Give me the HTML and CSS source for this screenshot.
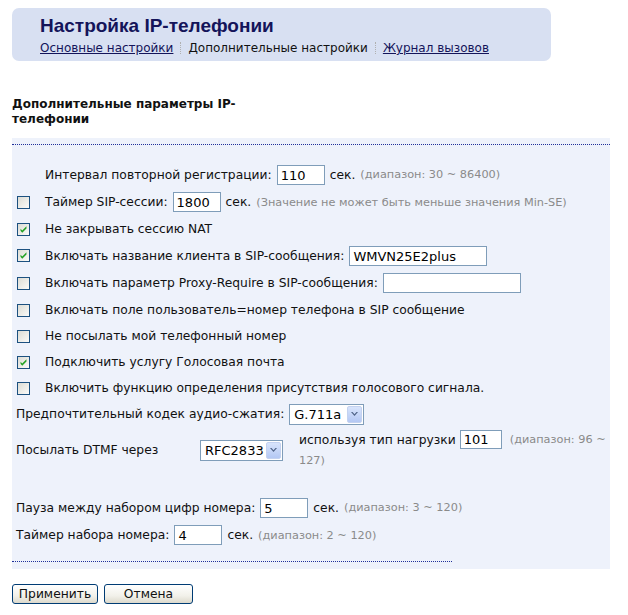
FILE: index.html
```html
<!DOCTYPE html>
<html lang="ru">
<head>
    <meta charset="UTF-8">
    <title>Настройка IP-телефонии</title>
    <link rel="stylesheet" href="styles.css">
</head>
<body>
<div class="header">
    <h1>Настройка IP-телефонии</h1>
    <div class="tabs">
        <a href="#">Основные настройки</a>
        <span class="sep"></span>
        <span class="current">Дополнительные настройки</span>
        <span class="sep"></span>
        <a href="#">Журнал вызовов</a>
    </div>
</div>

<h2 class="section">Дополнительные параметры IP-телефонии</h2>

<div class="panel">
    <div class="dots top"></div>

    <div class="row tall indent">
        <span>Интервал повторной регистрации:</span>
        <span class="field w48">110</span>
        <span>сек.</span>
        <span class="hint">(диапазон: 30 ~ 86400)</span>
    </div>
    <div class="row tall">
        <span class="cb"></span>
        <span>Таймер SIP-сессии:</span>
        <span class="field w48">1800</span>
        <span>сек.</span>
        <span class="hint">(Значение не может быть меньше значения Min-SE)</span>
    </div>
    <div class="row">
        <span class="cb"><svg viewBox="0 0 13 13"><path d="M3 5.5 L5 7.8 L10 2.8 L10 5.3 L5 10.3 L3 8 Z" fill="#21a121"/></svg></span>
        <span>Не закрывать сессию NAT</span>
    </div>
    <div class="row tall">
        <span class="cb"><svg viewBox="0 0 13 13"><path d="M3 5.5 L5 7.8 L10 2.8 L10 5.3 L5 10.3 L3 8 Z" fill="#21a121"/></svg></span>
        <span>Включать название клиента в SIP-сообщения:</span>
        <span class="field w138">WMVN25E2plus</span>
    </div>
    <div class="row tall">
        <span class="cb"></span>
        <span>Включать параметр Proxy-Require в SIP-сообщения:</span>
        <span class="field w138"></span>
    </div>
    <div class="row">
        <span class="cb"></span>
        <span>Включать поле пользователь=номер телефона в SIP сообщение</span>
    </div>
    <div class="row">
        <span class="cb"></span>
        <span>Не посылать мой телефонный номер</span>
    </div>
    <div class="row">
        <span class="cb"><svg viewBox="0 0 13 13"><path d="M3 5.5 L5 7.8 L10 2.8 L10 5.3 L5 10.3 L3 8 Z" fill="#21a121"/></svg></span>
        <span>Подключить услугу Голосовая почта</span>
    </div>
    <div class="row">
        <span class="cb"></span>
        <span>Включить функцию определения присутствия голосового сигнала.</span>
    </div>
    <div class="row flush">
        <span>Предпочтительный кодек аудио-сжатия:</span>
        <span class="select w75">G.711a<span class="arrow"><svg viewBox="0 0 7 5"><path d="M0 0 L3.5 4 L7 0 L5.5 0 L3.5 2.3 L1.5 0 Z" fill="#4d6185"/></svg></span></span>
    </div>

    <div class="dtmf">
        <div class="dtmf-label">Посылать DTMF через</div>
        <div class="dtmf-select">
            <span class="select w83">RFC2833<span class="arrow"><svg viewBox="0 0 7 5"><path d="M0 0 L3.5 4 L7 0 L5.5 0 L3.5 2.3 L1.5 0 Z" fill="#4d6185"/></svg></span></span>
        </div>
        <div class="dtmf-text">
            <div class="line"><span>используя тип нагрузки</span><span class="field small w42">101</span><span class="hint">(диапазон: 96 ~</span></div>
            <div class="line"><span class="hint">127)</span></div>
        </div>
    </div>

    <div class="row tall flush gap-top">
        <span>Пауза между набором цифр номера:</span>
        <span class="field w48">5</span>
        <span>сек.</span>
        <span class="hint">(диапазон: 3 ~ 120)</span>
    </div>
    <div class="row tall flush">
        <span>Таймер набора номера:</span>
        <span class="field w48">4</span>
        <span>сек.</span>
        <span class="hint">(диапазон: 2 ~ 120)</span>
    </div>

    <div class="dots bottom"></div>
</div>

<div class="buttons">
    <button class="w86">Применить</button>
    <button class="w89">Отмена</button>
</div>
</body>
</html>
```

FILE: styles.css
```css
body {
    margin: 0;
    padding: 8px 12px;
    background: #fff;
    color: #111;
    font-family: "DejaVu Sans", Verdana, sans-serif;
    font-size: 12.3px;
}
.header {
    width: 539px;
    box-sizing: border-box;
    height: 53px;
    padding: 5px 28px 0;
    background: #d8e0f2;
    border-radius: 7px;
}
.header h1 {
    margin: 0;
    font-family: "Liberation Sans", Arial, sans-serif;
    font-size: 19px;
    font-weight: bold;
    color: #14145a;
    line-height: 26px;
}
.tabs {
    display: flex;
    align-items: center;
    line-height: 18px;
    font-size: 12px;
}
.tabs a {
    color: #14145a;
}
.tabs .current {
    color: #111;
}
.sep {
    display: inline-block;
    width: 0;
    height: 12px;
    margin: 0 7px;
    border-left: 1px dotted #b0b0b0;
}
.section {
    width: 230px;
    margin: 36px 0 0;
    font-size: 12px;
    font-weight: bold;
    line-height: 15px;
    color: #111;
}
.panel {
    width: 598px;
    margin-top: 11px;
    padding: 6px 0 7px;
    background: #eef2fb;
}
.dots {
    height: 0;
    border-top: 1px dotted #20309a;
}
.dots.top {
    margin-bottom: 16px;
}
.dots.bottom {
    width: 440px;
    margin-top: 12px;
}
.row {
    display: flex;
    align-items: center;
    height: 26px;
    padding-left: 5px;
    white-space: nowrap;
}
.row.tall {
    height: 27.5px;
}
.row.indent {
    padding-left: 33px;
}
.row.flush {
    padding-left: 4px;
}
.row.gap-top {
    margin-top: 24px;
}
.row > span + span {
    margin-left: 5px;
}
.cb {
    flex: none;
    width: 11px;
    height: 11px;
    border: 1px solid #1c5180;
    background: linear-gradient(135deg, #dcdcd4, #fbfbf9);
}
.cb svg {
    display: block;
    width: 11px;
    height: 11px;
}
.row > .cb + span {
    margin-left: 15px;
}
.field {
    display: inline-block;
    box-sizing: border-box;
    height: 20px;
    padding: 1px 3px 0;
    line-height: 17px;
    font-size: 13px;
    background: #fff;
    border: 1px solid #7f9db9;
    color: #000;
    vertical-align: middle;
}
.field.small {
    height: 19px;
    line-height: 16px;
}
.w48 { width: 48px; }
.w42 { width: 42px; }
.w138 { width: 138px; }
.hint {
    font-size: 11.3px;
    color: #8a8a8a;
}
.select {
    position: relative;
    display: inline-block;
    box-sizing: border-box;
    height: 21px;
    padding: 1px 4px 0;
    line-height: 18px;
    font-size: 13px;
    background: #fff;
    border: 1px solid #7f9db9;
    color: #000;
    vertical-align: middle;
}
.w75 { width: 75px; }
.w83 { width: 83px; }
.arrow {
    position: absolute;
    top: 1px;
    right: 1px;
    width: 15px;
    height: 17px;
    border-radius: 2px;
    background: linear-gradient(#d8e4fb, #b4c8f4);
    border: 1px solid #c4d2f0;
    box-sizing: border-box;
    display: flex;
    align-items: center;
    justify-content: center;
}
.arrow svg {
    width: 7px;
    height: 5px;
}
.dtmf {
    display: flex;
    align-items: center;
    height: 40px;
    margin-top: 3px;
    padding-left: 4px;
}
.dtmf-label {
    width: 184px;
}
.dtmf-select {
    width: 99px;
}
.dtmf-text {
    flex: 1;
    padding-right: 4px;
}
.dtmf-text .line {
    display: flex;
    align-items: center;
    height: 21px;
    white-space: nowrap;
}
.dtmf-text .line > span + span {
    margin-left: 4px;
}
.dtmf-text .field + .hint {
    margin-left: 8px;
}
.buttons {
    margin-top: 15px;
    display: flex;
    gap: 6px;
}
button {
    height: 20px;
    padding: 0;
    font-family: "DejaVu Sans", Verdana, sans-serif;
    font-size: 12.3px;
    color: #111;
    border: 1px solid #003c74;
    border-radius: 3px;
    background: linear-gradient(#ffffff, #f2f1ea 60%, #dcd9cc);
}
.w86 { width: 86px; }
.w89 { width: 89px; }
```
